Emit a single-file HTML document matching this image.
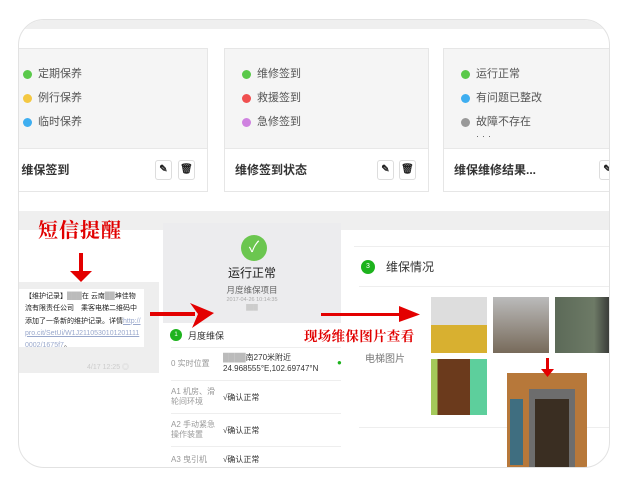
<!DOCTYPE html>
<html><head><meta charset="utf-8"><style>
*{margin:0;padding:0;box-sizing:border-box}
body{width:630px;height:480px;background:#fff;position:relative;overflow:hidden;font-family:"Liberation Sans","Noto Sans CJK SC",sans-serif;color:#333}
.a{position:absolute}
.frame{left:18px;top:19px;width:592px;height:449px;border-radius:26px;overflow:hidden;background:#fff;border:1px solid #e2e2e2}
.card{position:absolute;top:28px;height:144px;border:1px solid #e6e6e6;background:#f5f5f5}
.card .ft{position:absolute;left:0;right:0;bottom:0;height:43px;background:#fff;border-top:1px solid #e8e8e8;font-size:12px;font-weight:bold;color:#333;line-height:43px}
.it{position:absolute;font-size:11px;color:#555;line-height:14px}
.it i{position:absolute;left:-15px;top:3px;width:9px;height:9px;border-radius:50%}
.btn{position:absolute;top:11px;width:17px;height:20px;border:1px solid #ddd;border-radius:3px;background:#fff;font-size:10px;line-height:18px;text-align:center;color:#222}
.red{color:#e10000;font-weight:bold;font-family:"Noto Serif CJK SC","Noto Sans CJK SC",serif}
.row{position:absolute;left:8px;width:170px;border-top:1px solid #eee;font-size:8px;color:#999}
.row b{position:absolute;left:52px;font-weight:normal;color:#333}
.ph{position:absolute;width:56px;height:56px}
</style></head><body>
<div class="a frame">
 <div class="a" style="left:0;top:0;width:592px;height:9px;background:#efefef"></div>
 <div class="card" style="left:-2px;width:191px">
  <div class="it" style="left:20px;top:18px"><i style="background:#5ac94a"></i>定期保养</div>
  <div class="it" style="left:20px;top:42px"><i style="background:#f4c842"></i>例行保养</div>
  <div class="it" style="left:20px;top:66px"><i style="background:#3eaef0"></i>临时保养</div>
  <div class="ft">&nbsp;维保签到<div class="btn" style="left:137px">✎</div><div class="btn" style="left:160px">🗑</div></div>
 </div>
 <div class="card" style="left:205px;width:205px">
  <div class="it" style="left:32px;top:18px"><i style="background:#5ac94a"></i>维修签到</div>
  <div class="it" style="left:32px;top:42px"><i style="background:#f05050"></i>救援签到</div>
  <div class="it" style="left:32px;top:66px"><i style="background:#cf82e0"></i>急修签到</div>
  <div class="ft" style="padding-left:10px">维修签到状态<div class="btn" style="left:152px">✎</div><div class="btn" style="left:174px">🗑</div></div>
 </div>
 <div class="card" style="left:424px;width:173px">
  <div class="it" style="left:32px;top:18px"><i style="background:#5ac94a"></i>运行正常</div>
  <div class="it" style="left:32px;top:42px"><i style="background:#3eaef0"></i>有问题已整改</div>
  <div class="it" style="left:32px;top:66px"><i style="background:#999"></i>故障不存在</div>
  <div class="it" style="left:32px;top:80px;letter-spacing:3px;font-size:9px">···</div>
  <div class="ft" style="padding-left:10px">维保维修结果...<div class="btn" style="left:155px">✎</div></div>
 </div>
 <!-- bottom -->
 <div class="a" style="left:0;top:191px;width:592px;height:19px;background:#efefef"></div>
 <div class="a" style="left:0;top:262px;width:140px;height:91px;background:#eeeeee"></div>
 <div class="a" style="left:0;top:269px;width:125px;height:58px;background:#fff;font-size:7px;line-height:12.3px;padding:2px 3px 0 6px;color:#222;word-break:break-all;overflow:hidden">【维护记录】<span style="color:#bbb">███</span>在 云南<span style="color:#bbb">██</span>坤佳物流有限责任公司　乘客电梯二维码中添加了一条新的维护记录。详情<span style="color:#99a8cc;text-decoration:underline">http://pro.cit/SetUi/W1J21105301012011110002/1675f7</span>。</div>
 <div class="a" style="left:68px;top:342px;font-size:7px;color:#ccc">4/17 12:25 ◎</div>
 <div class="a red" style="left:19px;top:194px;font-size:20px;letter-spacing:1px">短信提醒</div>
 <svg class="a" style="left:50px;top:233px" width="24" height="30"><rect x="10" y="0" width="4" height="20" fill="#e30000"/><path d="M1 18 L23 18 L12 29Z" fill="#e30000"/></svg>
 <div class="a" style="left:144px;top:203px;width:178px;height:100px;background:#ececee"></div>
 <div class="a" style="left:222px;top:215px;width:26px;height:26px;border-radius:50%;background:#6bc64f;color:#fff;text-align:center;font-size:15px;line-height:26px">✓</div>
 <div class="a" style="left:144px;top:244px;width:178px;text-align:center;font-size:12px;color:#222">运行正常</div>
 <div class="a" style="left:144px;top:264px;width:178px;text-align:center;font-size:8.5px;color:#666">月度维保项目</div>
 <div class="a" style="left:144px;top:277px;width:178px;text-align:center;font-size:5.5px;color:#aaa">2017-04-26 10:14:35</div>
 <div class="a" style="left:144px;top:285px;width:178px;text-align:center;font-size:5.5px;color:#ccc">███</div>
 <div class="a" style="left:144px;top:303px;width:178px;height:146px;background:#fff">
  <div class="a" style="left:7px;top:6px;width:12px;height:12px;border-radius:50%;background:#1db31d;color:#fff;font-size:6px;text-align:center;line-height:12px">1</div>
  <div class="a" style="left:25px;top:6px;font-size:9px;color:#333">月度维保</div>
  <div class="row" style="top:24px;height:33px"><span style="position:absolute;top:10px">0 实时位置</span><b style="top:4px;line-height:11px"><span style="color:#bbb">████</span>南270米附近<br>24.968555°E,102.69747°N</b><span style="position:absolute;left:166px;top:10px;color:#1db31d">●</span></div>
  <div class="row" style="top:57px;height:33px"><span style="position:absolute;top:6px;line-height:10px">A1 机房、滑<br>轮间环境</span><b style="top:11px">√确认正常</b></div>
  <div class="row" style="top:90px;height:33px"><span style="position:absolute;top:6px;line-height:10px">A2 手动紧急<br>操作装置</span><b style="top:11px">√确认正常</b></div>
  <div class="row" style="top:123px;height:23px"><span style="position:absolute;top:7px">A3 曳引机</span><b style="top:7px">√确认正常</b></div>
 </div>
 <div class="a" style="left:335px;top:226px;width:257px;border-top:1px solid #eee"></div>
 <div class="a" style="left:342px;top:240px;width:14px;height:14px;border-radius:50%;background:#1db31d;color:#fff;font-size:7px;text-align:center;line-height:14px">3</div>
 <div class="a" style="left:367px;top:238px;font-size:12px;color:#333">维保情况</div>
 <div class="a" style="left:340px;top:266px;width:252px;border-top:1px solid #eee"></div>
 <div class="a" style="left:340px;top:407px;width:252px;border-top:1px solid #eee"></div>
 <div class="a" style="left:346px;top:330px;font-size:10px;color:#777">电梯图片</div>
 <div class="ph" style="left:412px;top:277px;background:linear-gradient(#ddd 0 50%,#d8b030 50% 100%)"></div>
 <div class="ph" style="left:474px;top:277px;background:linear-gradient(#bbb,#776a5a)"></div>
 <div class="ph" style="left:536px;top:277px;background:linear-gradient(90deg,#5c6a58,#6d7a66 70%,#333)"></div>
 <div class="ph" style="left:412px;top:339px;background:linear-gradient(90deg,#a4c95a 0 12%,#6b3a1c 12% 70%,#5dcf9c 70%)"></div>
 <div class="a" style="left:488px;top:353px;width:80px;height:96px;background:#b7783a"><div class="a" style="left:22px;top:16px;width:46px;height:80px;background:#6d6d6d"></div><div class="a" style="left:28px;top:26px;width:34px;height:70px;background:#3a2e22"></div><div class="a" style="left:3px;top:26px;width:13px;height:66px;background:#3f6e80"></div></div>
 <svg class="a" style="left:522px;top:338px" width="14" height="20"><rect x="5" y="0" width="3" height="12" fill="#e30000"/><path d="M0 11 L13 11 L6.5 19Z" fill="#e30000"/></svg>
 <svg class="a" style="left:131px;top:280px" width="65" height="30"><rect x="0" y="12" width="45" height="4" fill="#e30000"/><path d="M40 3 L64 13 L42 28 L48 14Z" fill="#e30000"/></svg>
 <svg class="a" style="left:302px;top:286px" width="100" height="20"><rect x="0" y="7" width="85" height="3" fill="#e30000"/><path d="M78 0 L99 8.5 L78 16Z" fill="#e30000"/></svg>
 <div class="a red" style="left:285px;top:305px;font-size:13.5px;letter-spacing:0.3px">现场维保图片查看</div>
</div>
</body></html>
